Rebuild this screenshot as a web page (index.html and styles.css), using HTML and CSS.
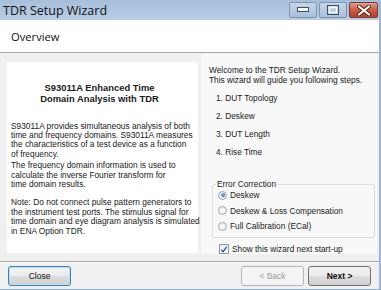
FILE: index.html
```html
<!DOCTYPE html>
<html>
<head>
<meta charset="utf-8">
<link rel="stylesheet" href="styles.css">
</head>
<body>
<div class="window">
  <div class="titlebar">
    <span class="title">TDR Setup Wizard</span>
    <div class="controls">
      <div class="ctl">
        <svg width="12" height="6" viewBox="0 0 12 6"><rect x="0.5" y="0.5" width="11" height="4" fill="#fff" stroke="#3d4f66"/></svg>
      </div>
      <div class="ctl">
        <svg width="12" height="10" viewBox="0 0 12 10"><rect x="0.5" y="0.5" width="11" height="9" fill="none" stroke="#3d4f66"/><rect x="2.5" y="2.5" width="7" height="5" fill="none" stroke="#fff" stroke-width="1.4"/></svg>
      </div>
      <div class="ctl ctl-close">
        <svg width="14" height="11" viewBox="0 0 14 11"><path d="M2 1.5 L12 9.5 M12 1.5 L2 9.5" stroke="#5a1a14" stroke-width="4" stroke-linecap="round"/><path d="M2 1.5 L12 9.5 M12 1.5 L2 9.5" stroke="#fff" stroke-width="2.2" stroke-linecap="round"/></svg>
      </div>
    </div>
  </div>
  <div class="header"><span class="header-title">Overview</span></div>
  <div class="main">
    <div class="left-panel">
      <div class="heading">S93011A Enhanced Time<br>Domain Analysis with TDR</div>
      <p class="para">S93011A provides simultaneous analysis of both<br>time and frequency domains. S93011A measures<br>the characteristics of a test device as a function<br>of frequency.</p>
      <p class="para para-tight">The frequency domain information is used to<br>calculate the inverse Fourier transform for<br>time domain results.</p>
      <p class="para para-gap">Note: Do not connect pulse pattern generators to<br>the instrument test ports. The stimulus signal for<br>time domain and eye diagram analysis is simulated<br>in ENA Option TDR.</p>
    </div>
    <div class="right-panel">
      <div class="intro">Welcome to the TDR Setup Wizard.<br>This wizard will guide you following steps.</div>
      <ol class="steps">
        <li>1. DUT Topology</li>
        <li>2. Deskew</li>
        <li>3. DUT Length</li>
        <li>4. Rise Time</li>
      </ol>
      <fieldset class="group">
        <legend class="group-label">Error Correction</legend>
        <label class="option"><span class="radio radio-on"></span>Deskew</label>
        <label class="option"><span class="radio"></span>Deskew &amp; Loss Compensation</label>
        <label class="option"><span class="radio"></span>Full Calibration (ECal)</label>
      </fieldset>
      <label class="check-row"><span class="checkbox"><svg width="9" height="9" viewBox="0 0 9 9"><path d="M1.5 4.8 L3.5 7 L7.5 1.5" fill="none" stroke="#2a4fa8" stroke-width="1.4"/></svg></span>Show this wizard next start-up</label>
    </div>
  </div>
  <div class="footer">
    <button class="btn btn-focus">Close</button>
    <div class="spacer"></div>
    <button class="btn btn-disabled">&lt; Back</button>
    <button class="btn btn-bold">Next &gt;</button>
  </div>
</div>
</body>
</html>
```

FILE: styles.css
```css
html, body {
  margin: 0;
  padding: 0;
  background: #f0f0f0;
}
.window {
  width: 381px;
  height: 290px;
  display: flex;
  flex-direction: column;
  background: #f0f0f0;
  font-family: "Liberation Sans", Arial, sans-serif;
  color: #1a1a1a;
  box-sizing: border-box;
  border-right: 2px solid #9db5d3;
  border-bottom: 1px solid #8fb2d8;
  overflow: hidden;
}
.titlebar {
  height: 20px;
  flex: none;
  display: flex;
  align-items: center;
  background: linear-gradient(#a7bfdb, #b9cde5);
}
.title {
  font-family: "Open Sans", "Liberation Sans", sans-serif;
  font-size: 12.5px;
  color: #111;
  padding-left: 3px;
  flex: 1;
}
.controls {
  display: flex;
  gap: 2px;
  padding-right: 1px;
  align-self: flex-start;
  padding-top: 2px;
}
.ctl {
  width: 28px;
  height: 16px;
  box-sizing: border-box;
  border: 1px solid #7f93ad;
  border-radius: 2px;
  background: linear-gradient(#c5d6ea, #a8bfdb);
  display: flex;
  align-items: center;
  justify-content: center;
}
.ctl-close {
  width: 29px;
  border-color: #7a3a33;
  background: linear-gradient(#e0a393, #c75a46 50%, #b84332);
}
.header {
  height: 32px;
  flex: none;
  background: #fff;
  border-bottom: 1px solid #a8a8a8;
  display: flex;
  align-items: center;
}
.header-title {
  font-family: "Open Sans", "Liberation Sans", sans-serif;
  font-size: 11.2px;
  padding-left: 11px;
  color: #111;
}
.main {
  flex: 1;
  display: flex;
  align-items: flex-start;
}
.left-panel {
  margin: 9px 0 0 7px;
  width: 191px;
  height: 191px;
  box-sizing: border-box;
  background: #fff;
  padding: 19.5px 0 0 4px;
  font-size: 8.35px;
  line-height: 9.4px;
  white-space: nowrap;
}
.heading {
  font-weight: bold;
  font-size: 9.4px;
  line-height: 11px;
  text-align: center;
  margin: 0 10px 18px 0;
}
.para {
  margin: 0;
}
.para-tight {
  margin-top: 2px;
}
.para-gap {
  margin-top: 9px;
}
.right-panel {
  margin: 1px 0 0 3px;
  width: 176px;
  height: 200px;
  box-sizing: border-box;
  background: #f8f8f8;
  padding: 11px 0 0 8px;
  font-size: 8.3px;
}
.intro {
  line-height: 10px;
}
.steps {
  list-style: none;
  margin: 8px 0 0 0;
  padding: 0 0 0 7px;
  display: flex;
  flex-direction: column;
  gap: 8px;
  line-height: 10px;
}
.group {
  margin: 22px 2px 0 3px;
  padding: 1px 0 6px 4px;
  border: 1px solid #dcdcdc;
  border-radius: 2px;
  display: flex;
  flex-direction: column;
  gap: 5.5px;
}
.group-label {
  padding: 0 1px;
  margin-left: -1px;
  line-height: 10px;
}
.option {
  display: flex;
  align-items: center;
  gap: 3px;
  line-height: 10px;
  margin-left: 1px;
}
.radio {
  width: 9px;
  height: 9px;
  border-radius: 50%;
  box-sizing: border-box;
  border: 1px solid #a0a8b0;
  background: radial-gradient(circle at 50% 50%, #fff, #dfe3e8);
  display: inline-block;
  position: relative;
}
.radio-on::after {
  content: "";
  position: absolute;
  left: 1.5px;
  top: 1.5px;
  width: 4px;
  height: 4px;
  border-radius: 50%;
  background: radial-gradient(circle at 40% 35%, #7fb4f0, #1e5cb8);
}
.check-row {
  display: flex;
  align-items: center;
  gap: 3px;
  margin: 6px 0 0 10px;
  line-height: 10px;
}
.checkbox {
  width: 10px;
  height: 10px;
  box-sizing: border-box;
  border: 1px solid #8e9aa8;
  background: linear-gradient(#e6eaee, #ffffff);
  display: flex;
  align-items: center;
  justify-content: center;
}
.footer {
  height: 28px;
  flex: none;
  border-top: 1px solid #a8a8a8;
  box-shadow: inset 0 1px 0 #fff;
  display: flex;
  align-items: flex-start;
  padding: 4px 8px 0 8px;
  box-sizing: border-box;
  gap: 4px;
}
.spacer {
  flex: 1;
}
.btn {
  width: 63px;
  height: 20px;
  box-sizing: border-box;
  font-family: "Liberation Sans", Arial, sans-serif;
  font-size: 8.5px;
  color: #111;
  border: 1px solid #707070;
  border-radius: 3px;
  background: linear-gradient(#f2f2f2 0%, #ebebeb 50%, #dddddd 51%, #cfcfcf 100%);
  padding: 0;
}
.btn-focus {
  border-color: #3c7fb1;
  box-shadow: inset 0 0 0 1px #b7e2f7;
}
.btn-disabled {
  color: #9a9a9a;
  border-color: #b5b5b5;
  background: #f4f4f4;
}
.btn-bold {
  font-weight: bold;
}
```
